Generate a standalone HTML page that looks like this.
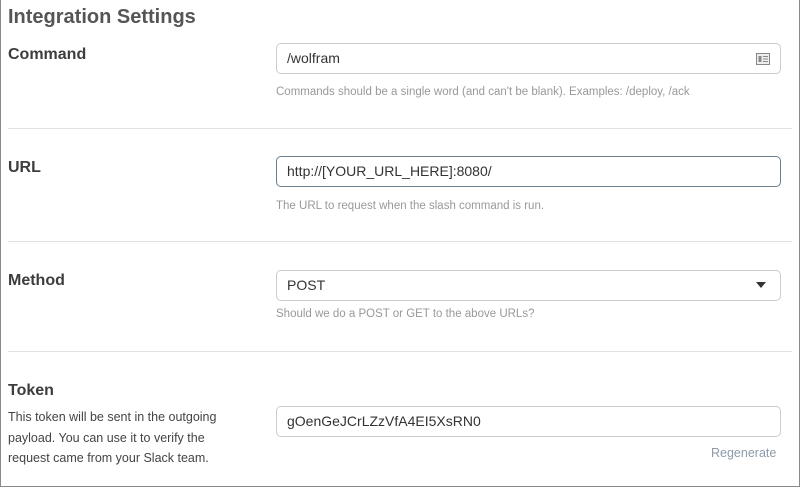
<!DOCTYPE html>
<html><head><style>
*{margin:0;padding:0;box-sizing:border-box}
body{width:800px;height:487px;overflow:hidden;background:#fff;font-family:"Liberation Sans",sans-serif;position:relative}
.frame{position:absolute;left:0;top:0;width:800px;height:487px;border:1px solid #8a8a8a;border-top:none}
.abs{position:absolute}
.title{left:8px;top:6px;font-size:20px;font-weight:bold;color:#555}
.lbl{left:8px;font-size:16px;font-weight:bold;color:#3d3d3d}
.inp{left:276px;width:505px;height:31px;border:1px solid #ccc;border-radius:5px;font-size:14px;color:#333;padding-left:10px;line-height:29px}
.help{left:276px;font-size:11.5px;color:#999}
.hr{left:8px;width:784px;height:1px;background:#e2e2e2}
</style></head><body>
<div class="frame"></div>
<div class="abs title">Integration Settings</div>
<div class="abs lbl" style="top:46px">Command</div>
<div class="abs inp" style="top:43px">/wolfram
<svg class="abs" style="right:10px;top:9px" width="14" height="12" viewBox="0 0 14 12"><rect x="0.5" y="0.5" width="13" height="11" fill="#eee" stroke="#888"/><rect x="2.5" y="3" width="3" height="6" fill="#888"/><line x1="7" y1="3.5" x2="12" y2="3.5" stroke="#888"/><line x1="7" y1="6" x2="12" y2="6" stroke="#888"/><line x1="7" y1="8.5" x2="12" y2="8.5" stroke="#888"/></svg></div>
<div class="abs help" style="top:86px">Commands should be a single word (and can't be blank). Examples: /deploy, /ack</div>
<div class="abs hr" style="top:128px"></div>
<div class="abs lbl" style="top:159px">URL</div>
<div class="abs inp" style="top:156px;border-color:#6b7f93">http://[YOUR_URL_HERE]:8080/</div>
<div class="abs help" style="top:200px">The URL to request when the slash command is run.</div>
<div class="abs hr" style="top:241px"></div>
<div class="abs lbl" style="top:272px">Method</div>
<div class="abs inp" style="top:270px">POST
<svg class="abs" style="right:14px;top:11px" width="10" height="6" viewBox="0 0 10 6"><path d="M0 0H10L5 6Z" fill="#333"/></svg></div>
<div class="abs help" style="top:308px">Should we do a POST or GET to the above URLs?</div>
<div class="abs hr" style="top:351px"></div>
<div class="abs lbl" style="top:382px">Token</div>
<div class="abs" style="left:8px;top:407px;font-size:12.5px;color:#444;line-height:20.5px;width:230px">This token will be sent in the outgoing payload. You can use it to verify the request came from your Slack team.</div>
<div class="abs inp" style="top:406px">gOenGeJCrLZzVfA4EI5XsRN0</div>
<div class="abs" style="left:711px;top:446px;font-size:12.5px;color:#8d9aa8">Regenerate</div>
</body></html>
